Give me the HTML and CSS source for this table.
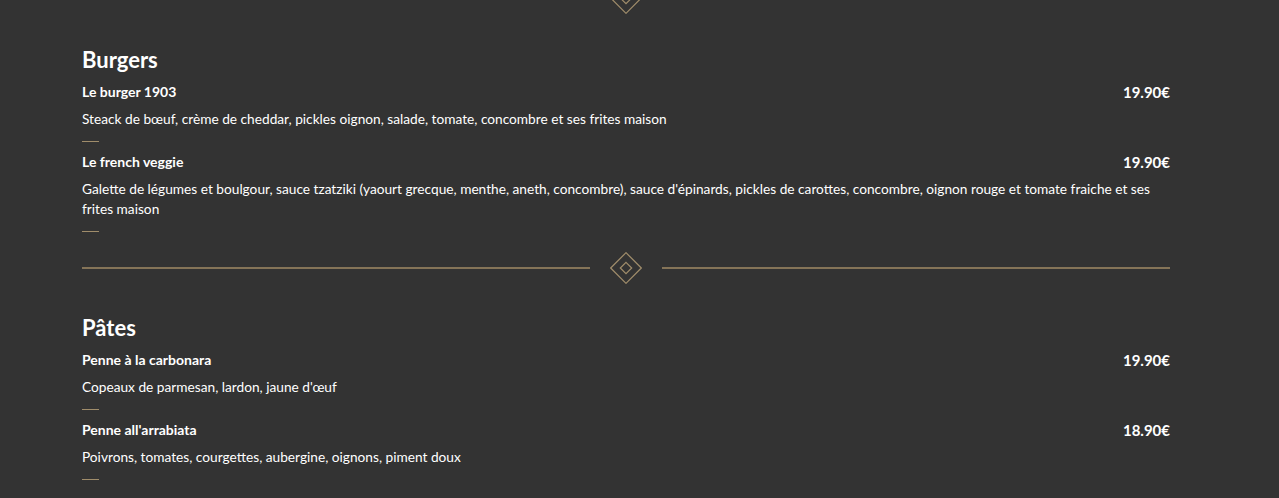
FILE: index.html
```html
<html>
<head>
  <title>Carte</title>
  <link rel="stylesheet" href="styles.css">
</head>
<body>

<div class="menu">

  <div class="divider divider-top">
    <span class="divider-line"></span>
    <svg class="divider-mark" width="32" height="32" viewBox="0 0 32 32">
      <polygon points="16,0.7 31.3,16 16,31.3 0.7,16" fill="none" stroke="#a08d6b" stroke-width="1.2"/>
      <polygon points="16,10.3 21.7,16 16,21.7 10.3,16" fill="none" stroke="#a08d6b" stroke-width="1.2"/>
    </svg>
    <span class="divider-line"></span>
  </div>

  <div class="section">
    <h2 class="section-title">Burgers</h2>

    <div class="dish">
      <div class="dish-head">
        <span class="dish-name">Le burger 1903</span>
        <span class="dish-price">19.90€</span>
      </div>
      <p class="dish-desc">Steack de bœuf, crème de cheddar, pickles oignon, salade, tomate, concombre et ses frites maison</p>
      <span class="dish-dash"></span>
    </div>

    <div class="dish">
      <div class="dish-head">
        <span class="dish-name">Le french veggie</span>
        <span class="dish-price">19.90€</span>
      </div>
      <p class="dish-desc">Galette de légumes et boulgour, sauce tzatziki (yaourt grecque, menthe, aneth, concombre), sauce d'épinards, pickles de carottes, concombre, oignon rouge et tomate fraiche et ses frites maison</p>
      <span class="dish-dash"></span>
    </div>
  </div>

  <div class="divider">
    <span class="divider-line"></span>
    <svg class="divider-mark" width="32" height="32" viewBox="0 0 32 32">
      <polygon points="16,0.7 31.3,16 16,31.3 0.7,16" fill="none" stroke="#a08d6b" stroke-width="1.2"/>
      <polygon points="16,10.3 21.7,16 16,21.7 10.3,16" fill="none" stroke="#a08d6b" stroke-width="1.2"/>
    </svg>
    <span class="divider-line"></span>
  </div>

  <div class="section">
    <h2 class="section-title">Pâtes</h2>

    <div class="dish">
      <div class="dish-head">
        <span class="dish-name">Penne à la carbonara</span>
        <span class="dish-price">19.90€</span>
      </div>
      <p class="dish-desc">Copeaux de parmesan, lardon, jaune d'œuf</p>
      <span class="dish-dash"></span>
    </div>

    <div class="dish">
      <div class="dish-head">
        <span class="dish-name">Penne all'arrabiata</span>
        <span class="dish-price">18.90€</span>
      </div>
      <p class="dish-desc">Poivrons, tomates, courgettes, aubergine, oignons, piment doux</p>
      <span class="dish-dash"></span>
    </div>
  </div>

</div>

</body>
</html>
```

FILE: styles.css
```css
body
{
  margin: 0;
  background: #333333;
  color: #ffffff;
  font-family: Lato, "Open Sans", sans-serif;
  overflow: hidden;
}

.menu
{
  width: 1088px;
  margin-left: 82px;
}

/* separator with the gold diamond */
.divider
{
  display: flex;
  align-items: center;
  gap: 20px;
  height: 32px;
}
.divider-top
{
  margin-top: -18px;
  margin-bottom: 2px;
}
.divider-line
{
  flex: 1;
  height: 2px;
  background: #857458;
}
.divider-mark
{
  display: block;
  flex: none;
}

.section
{
  padding: 31px 0 20px;
}
.section-title
{
  margin: 0 0 9px;
  font-size: 22px;
  line-height: 26px;
  font-weight: 700;
}

.dish
{
  margin-bottom: 10px;
}
.dish:last-child
{
  margin-bottom: 0;
}
.dish-head
{
  display: flex;
  justify-content: space-between;
  align-items: center;
  height: 20px;
  line-height: 20px;
}
.dish-name
{
  font-size: 14px;
  font-weight: 700;
}
.dish-price
{
  font-size: 15px;
  font-weight: 700;
}
.dish-desc
{
  margin: 7px 0 12px;
  font-size: 13.7px;
  line-height: 20px;
}
.dish-dash
{
  display: block;
  width: 17px;
  height: 1px;
  background: #a08d6b;
}
```
